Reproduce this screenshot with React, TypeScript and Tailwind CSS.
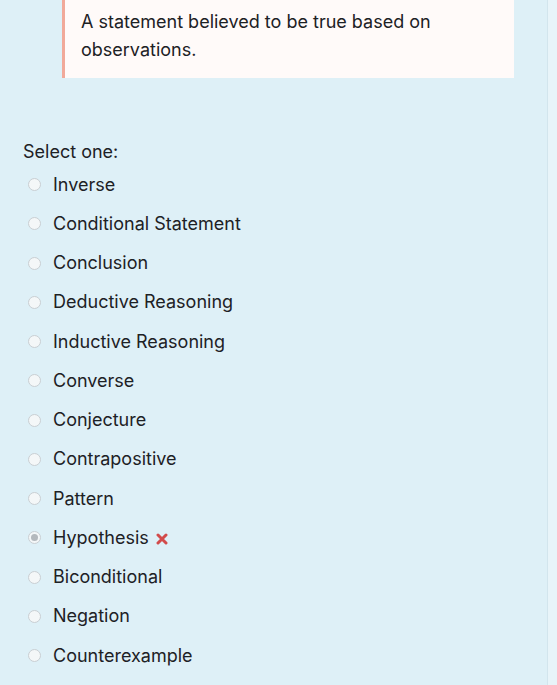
const options = [
  'Inverse',
  'Conditional Statement',
  'Conclusion',
  'Deductive Reasoning',
  'Inductive Reasoning',
  'Converse',
  'Conjecture',
  'Contrapositive',
  'Pattern',
  'Hypothesis',
  'Biconditional',
  'Negation',
  'Counterexample',
];

function Radio({ checked }: { checked: boolean }) {
  return (
    <span className="w-[13px] h-[13px] rounded-full border border-[#c9cfd3] bg-[#f4f7f8] flex items-center justify-center shrink-0">
      {checked && <span className="w-[7px] h-[7px] rounded-full bg-[#b4b9bd]" />}
    </span>
  );
}

export default function App() {
  return (
    <div className="w-[557px] h-[685px] overflow-hidden flex bg-[#e8f4f9] text-[#1d2125] font-['Inter','Liberation_Sans',sans-serif]">
      <div className="w-[548px] shrink-0 bg-[#def0f7] border-r border-[#d2e5ed]">
        {/* Feedback quote */}
        <div className="ml-[62px] w-[452px] border-l-[3px] border-[#f1a99a] bg-[#fffaf9] pl-[16px] pr-4 pt-[8px] pb-[14px] text-[18px] leading-[28px]">
          A statement believed to be true based on observations.
        </div>

        {/* Answer */}
        <div className="pl-[23px] pt-[62px]">
          <div className="text-[18px] leading-[24px]">Select one:</div>
          <div className="mt-[1px]">
            {options.map((o) => (
              <div key={o} className="flex items-center h-[39.25px] pl-[5px]">
                <Radio checked={o === 'Hypothesis'} />
                <span className="ml-[12px] text-[18px] leading-[24px]">{o}</span>
                {o === 'Hypothesis' && (
                  <svg className="ml-[7px] mt-[2px]" width="12" height="12" viewBox="0 0 12 12">
                    <path d="M2 2L10 10M10 2L2 10" stroke="#d24b4b" strokeWidth="3" strokeLinecap="round" />
                  </svg>
                )}
              </div>
            ))}
          </div>
        </div>
      </div>
    </div>
  );
}
